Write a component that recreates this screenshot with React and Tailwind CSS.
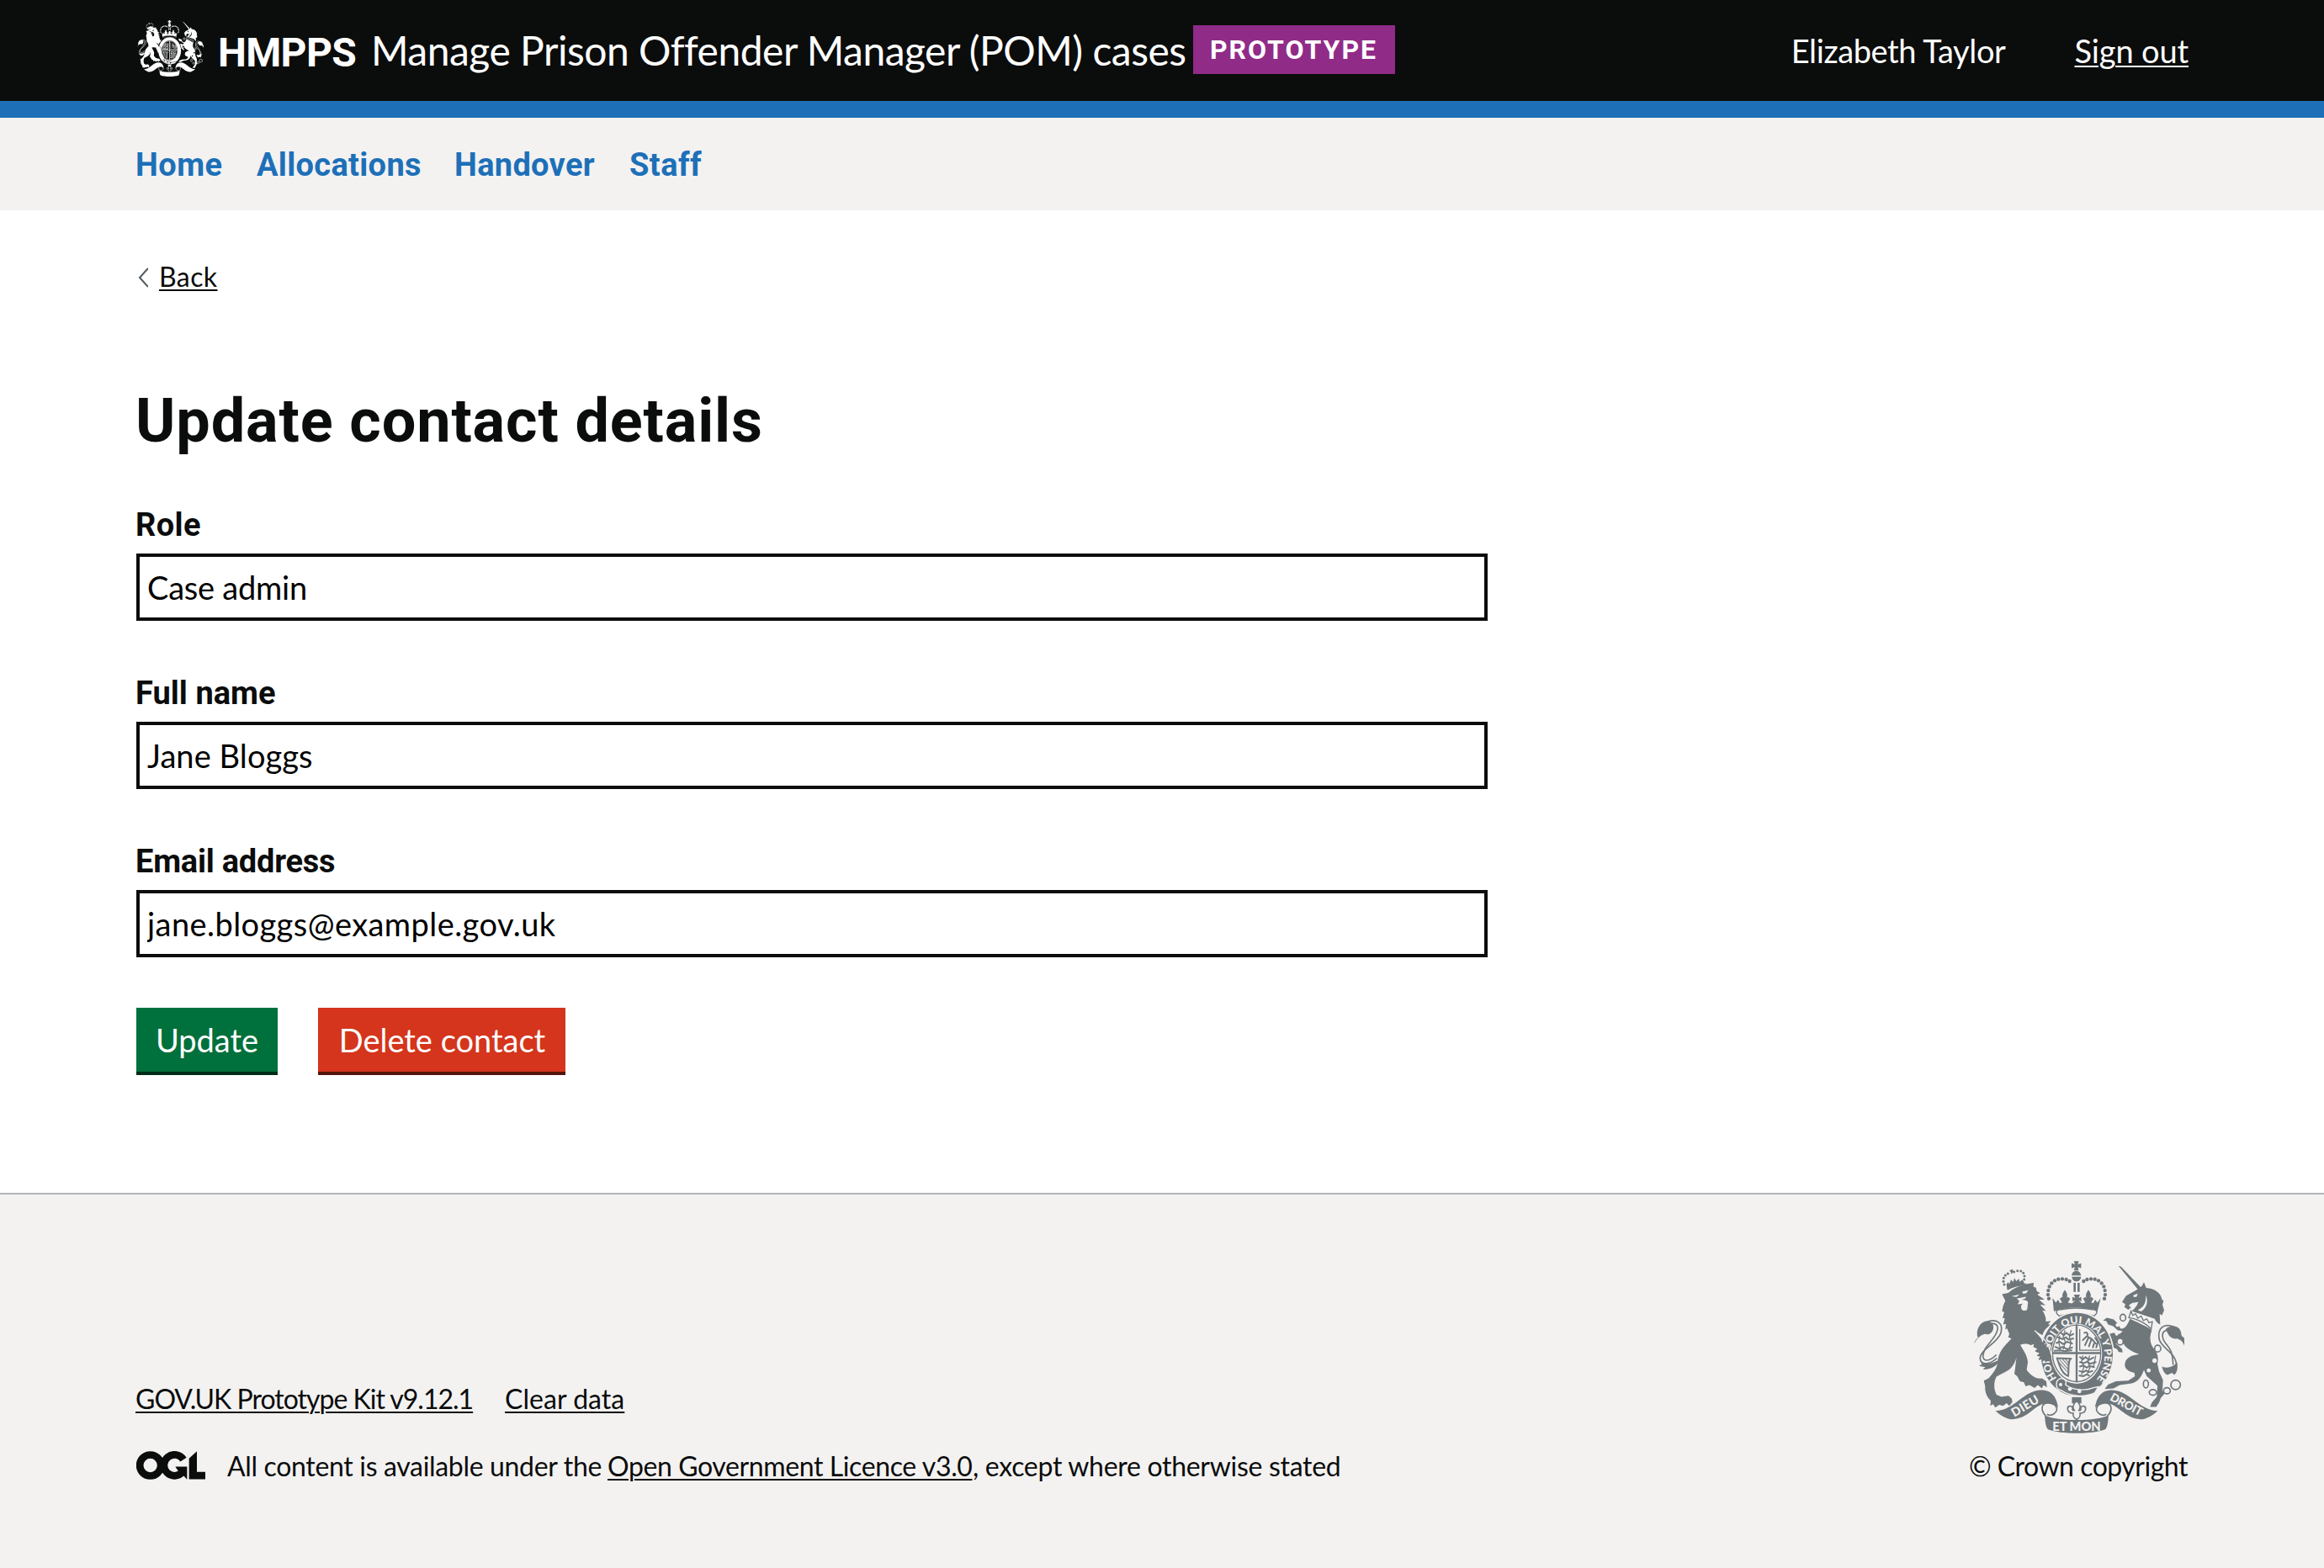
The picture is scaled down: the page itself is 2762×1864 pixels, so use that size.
const PEARLS = [
  [345, 192], [342, 178], [343, 163], [347, 149], [355, 137], [366, 128], [379, 123], [393, 122], [407, 124], [419, 130],
];

const LION_CROWN_PEARLS = [
  [186, 142], [183, 131], [184, 119], [190, 109], [199, 103], [221, 97], [233, 93], [245, 94], [254, 101], [258, 112], [257, 124],
];

function Crest({ className, ink, ground, compact = false }) {
  return (
    <svg className={className} viewBox="78 58 750 614" preserveAspectRatio="none" fill={ink} aria-hidden="true">
      {/* crown */}
      <path d="M434 59h18l-4 11 12-4v18l-12-4 4 12h-18l4-12-12 4V66l12 4z" />
      <path d="M426 110c1-10 8-17 17-17s16 7 17 17zM427 114h33c-1 10-8 17-17 17s-15-7-16-17z" />
      {PEARLS.map(([x, y]) => (
        <g key={x + "-" + y}>
          <circle cx={x} cy={y} r="6.500" />
          <circle cx={888 - x} cy={y} r="6.500" />
        </g>
      ))}
      <path d="M433 136h8v32h-8zM447 136h8v32h-8z" />
      <path d="M358 190l12 16 8-10 6 12 8-2-8-14 8-6 3 4c-4-12 0-20 7-29 7 9 11 17 7 29l4-4 8 6-8 14 14 3 12-10-10 3v-16l10 4-5-12h22l-5 12 10-4v16l-10-3 12 10 12-3-8-14 8-6 4 4c-4-12 0-20 7-29 7 9 11 17 7 29l3-4 8 6-8 14 8 2 6-12 8 10 12-16-12 48c-40-18-115-18-155 0z" />
      <path d="M374 246c-6-10 2-15 14-15 36-7 75-7 112 0 12 0 20 5 14 15l-8 8c-40-14-84-14-124 0z" fill={ground} stroke={ink} strokeWidth="4" />

      {/* lion */}
      {LION_CROWN_PEARLS.map(([x, y]) => (
        <circle key={x + "-" + y} cx={x} cy={y} r="4.500" />
      ))}
      <path d="M206 90l5 1 1-4 5 1-1 4 5 2-2 5-4-1-1 6-5-1 1-6-5-2zM194 140l6-6 4 6 6-15 8 8 4-14 7 11 9-9 3 12 8-8 5 5 4 10-62 18z" />
      <path d="M196 155c22-12 44-17 66-18l2 7c-24 1-46 7-66 18z" />
      <path d="M178 176L200 172C222 152 252 140 291 136L290 150L299 153L302 166L314 172L304 178L330 196L310 196L333 216L314 214L335 236L322 234C332 250 336 262 334 274L353 272L342 283L352 286C338 294 328 304 322 322L296 308C316 332 332 350 336 372L352 396L348 404L353 416L340 412L334 420L326 408L308 410L314 398L302 396L312 386L296 380L304 370L290 364L296 352L280 358C270 352 256 352 243 357C256 380 268 394 270 418L266 446C280 466 300 480 320 476L336 486L338 508L326 500L320 512L306 500L294 510L276 500L262 504L256 490L242 486L232 468L222 460C226 440 226 420 230 402C220 430 210 444 192 452L158 470C148 490 148 512 158 534L176 542L200 538C212 544 216 552 214 562L204 574L194 564L182 574L168 570L154 580L146 568L136 574L138 556C122 540 116 520 118 504L113 484L130 476C148 456 160 440 162 420C164 384 184 362 212 334L200 330L204 318L196 298L190 302L192 282L182 284L188 262L180 262L186 240L178 238C180 224 182 214 190 200Z" />
      <path d="M212 184l28-7-10 9zM250 167l22-5-8 11-12 1z" fill={ground} />
      <path d="M230 192l34-7-4 7-12 4 14 2c8 2 10 6 8 14l-2 18c-4 6-16 6-20 0-4-8-2-16 4-20l-18 2 6-12z" fill={ground} />
      <path d="M122 276C158 260 184 280 174 314C162 352 98 374 100 406C102 424 124 434 160 404" fill="none" stroke={ink} strokeWidth="5" />
      <path d="M142 280C168 282 166 300 154 322C136 352 112 366 110 398C112 416 132 418 158 392" fill="none" stroke={ink} strokeWidth="5" />
      <path d="M79 352c2-14 10-16 14-24-6-2-2-8-4-14 2-20 14-42 38-42 16 2 22 14 20 26-4 18-16 24-30 20-16 4-30 18-38 34zM98 410c14 22 44 14 70 0-4 20-30 36-58 34l8-8-22-4 10-6z" />

      {/* unicorn */}
      <path d="M593 75l10 4 71 74-12 6z" />
      <path d="M606 204L620 182L656 162L676 148L684 134L692 154C722 156 744 172 748 194L754 200L750 214L756 234L748 252L740 246L742 284C734 282 728 276 722 264L640 236C652 228 660 216 664 204L642 208L630 216L638 224L628 232L614 222L618 212Z" />
      <path d="M646 180l16-6-4 11-10 2zM690 180c12 24 2 46-16 58l-12-5c24-12 30-29 28-53z" fill={ground} />
      <path d="M638 236l6 16 10-6 8 16 12-8 8 16 12-6 8 14 12-4-4 26c-20-20-50-36-80-40z" fill={ground} stroke={ink} strokeWidth="4" />
      <path d="M634 264C660 276 690 288 712 304C704 328 704 346 716 366C732 384 738 402 732 424L738 452L752 482L750 520L758 530L744 546L738 562L728 578L706 578L712 562L730 542L732 502L694 468L684 446C676 470 664 488 640 494L598 500L576 512L544 514L556 498L584 486L628 484L652 468L650 456C628 452 614 442 616 424C620 400 644 392 668 390C640 382 620 368 612 354L600 348L584 352L606 372L608 384L594 382L588 372L574 366L560 340L554 320L574 314L598 318L608 308L590 304L574 290L556 284L550 272L538 270L552 260L576 266L592 282L600 298C614 302 624 290 634 264Z" />
      <g fill={ground}>
        <circle cx="590" cy="286" r="7" />
        <circle cx="587" cy="318" r="6" />
        <circle cx="722" cy="413" r="8" />
        <circle cx="701" cy="448" r="7" />
      </g>
      <g fill={ground} stroke={ink} strokeWidth="5">
        <ellipse cx="609" cy="260" rx="10" ry="12" />
        <ellipse cx="599" cy="345" rx="11" ry="12" />
        <ellipse cx="733" cy="370" rx="11" ry="12" />
        <ellipse cx="691" cy="496" rx="9" ry="14" />
        <ellipse cx="716" cy="526" rx="13" ry="10" />
        <ellipse cx="766" cy="520" rx="12" ry="11" />
        <circle cx="797" cy="499" r="17" />
      </g>
      <path d="M790 292C752 278 732 300 738 336C748 372 800 384 800 432" fill="none" stroke={ink} strokeWidth="5" />
      <path d="M770 304C744 306 746 332 762 352C778 372 786 380 788 428" fill="none" stroke={ink} strokeWidth="5" />
      <path d="M762 300c10-12 44-16 52 6 6 14 0 20 12 24 4 8 2 18 2 30-4-16-16-24-28-26-18 4-30-10-38-34zM802 420c4 22 0 34-10 44l-8-8-16 8c-10-4-16-14-20-30 18 8 36 4 54-14z" />

      {/* garter and shield */}
      <ellipse cx="445" cy="391" rx="133" ry="153" fill={ground} />
      <ellipse cx="445" cy="391" rx="128" ry="148" />
      <ellipse cx="444" cy="388" rx="91" ry="107" fill={ground} />
      <ellipse cx="444" cy="387" rx="86" ry="101" fill="none" stroke={ink} strokeWidth="4" />
      <path d="M444 284v206M358 386h172" stroke={ink} strokeWidth="7" />
      <g fill="none" stroke={ink} strokeWidth="6" strokeLinecap="round">
        <path d="M388 314l10 8 10-8 12 10 12-6M378 330l16 6 12-6 8 8 18-4M372 350l12-4 12 8 14-8 18 6M368 364l14 6 12-6 16 8 18-6M366 378l20-2 14 3 26-3" />
        <path d="M402 306l-6 22 8 18-8 26M424 306l-6 24 6 18-6 24M384 326l-4 20 6 26" strokeWidth="4" />
        <path d="M456 400l10 8 10-8 12 10 16-8M456 418l14 4 12-6 10 8 20-6M456 434l12-4 12 8 10-6 16 4M454 450l14 4 10-6 10 6 12-4M454 466l14 2 12-6 8 4" />
        <path d="M466 396l-4 20 8 18-8 28M490 396l-6 22 8 18-10 24M512 396l-4 20-4 18" strokeWidth="4" />
        <path d="M455 302v74h70" strokeWidth="4" />
        <path d="M472 314c8-4 14 2 10 12l16 10 14 16M480 326l-14 14M486 332l-12 26M496 338l-8 24M506 352l-4 14M514 366l6-20-10-14" />
        <path d="M374 404c10 30 18 56 40 64M374 404l48 2M424 406c-14 10-6 30-10 62" />
        <path d="M384 410l30 34M394 408l22 24M404 408l14 14M382 420l30 34" strokeWidth="3" />
      </g>
      {!compact && (
        <>
          <path id="garter-line" d="M373 476A98 117 0 1 1 494 499" fill="none" />
          <text fill={ground} className="font-['Lato'] text-[36px] font-black">
            <textPath href="#garter-line" textLength="512" lengthAdjust="spacingAndGlyphs">HONI SOIT QUI MAL Y PENSE</textPath>
          </text>
        </>
      )}
      <path d="M296 326C318 342 338 356 342 374L352 396L348 404L353 416L340 412L334 420L326 408L308 410L314 398L302 396L312 386L296 380L304 370L290 364Z" />
      <path d="M294 306C318 324 338 342 346 366L356 396" fill="none" stroke={ground} strokeWidth="4" />
      <path d="M374 486c14-20 40-4 30 12 28 22 76 22 98 12l20-4-14 22c-40 18-86 12-120-10-12 0-20-14-14-32z" stroke={ground} strokeWidth="4" />
      <g fill={ground}>
        <circle cx="387" cy="498" r="6" />
        <circle cx="420" cy="514" r="7" />
        <circle cx="454" cy="522" r="7" />
      </g>

      {/* motto ribbon */}
      <path d="M155 592C225 590 255 516 322 518C360 520 374 550 378 580C366 568 350 562 334 566C296 566 268 628 205 621C186 616 168 604 155 592Z" />
      <path d="M733 592C663 590 633 516 566 518C528 520 514 550 510 580C522 568 538 562 554 566C592 566 620 628 683 621C702 616 720 604 733 592Z" />
      <path d="M334 610C312 586 320 562 344 564C370 566 382 584 366 600C358 608 346 608 338 604" fill={ground} stroke={ink} strokeWidth="5" />
      <path d="M554 610C576 586 568 562 544 564C518 566 506 584 522 600C530 608 542 608 550 604" fill={ground} stroke={ink} strokeWidth="5" />
      <path d="M330 606C364 630 524 630 558 606C556 626 556 646 546 658C500 676 388 676 342 658C332 646 332 626 330 606Z" />
      {!compact && (
        <g fill={ground} className="font-['Lato'] font-black">
          <text transform="translate(222 614) rotate(-31)" textLength="106" className="text-[43px]">DIEU</text>
          <text transform="translate(560 552) rotate(28)" textLength="124" className="text-[41px]">DROIT</text>
          <text x="358" y="662" textLength="172" className="text-[44px]">ET MON</text>
        </g>
      )}
      <path d="M427 543h34v22h-34z" />
      <path d="M444 556c14 14 16 22 8 34 8 2 8-4 6-8 4-12 20-8 18 4-2 12-14 14-20 14 2 8-2 18-12 22-10-4-14-14-12-22-6 0-18-2-20-14-2-12 14-16 18-4-2 4-2 10 6 8-8-12-6-20 8-34z" fill={ground} stroke={ink} strokeWidth="5" />
    </svg>
  );
}

function OglLogo() {
  return (
    <svg className="mt-[2px] h-[34px] w-[82px]" viewBox="21 42 246 101" role="img" aria-label="OGL" fill="none" stroke="#0b0c0c">
      <circle cx="71" cy="92.500" r="37.500" strokeWidth="26" />
      <path d="M189 72A37.500 37.500 0 1 0 186 116" strokeWidth="26" />
      <path d="M160 97h42v46l-14-15-10-4z" fill="#0b0c0c" stroke="none" />
      <path d="M209 68l28-26v74h30v26h-58z" fill="#0b0c0c" stroke="none" />
    </svg>
  );
}

function Field({ label, value, labelClass, inputClass }) {
  return (
    <div>
      <label className={"-ml-px block h-[44px] pt-px font-['Roboto'] text-[38px] leading-[44px] font-bold " + labelClass}>{label}</label>
      <input
        className={"mt-[13px] block h-[80px] w-[1606px] border-4 border-[#0b0c0c] bg-white pl-[9px] text-[38px] text-black outline-none " + inputClass}
        defaultValue={value}
        spellCheck={false}
      />
    </div>
  );
}

const LINK = "underline decoration-2 underline-offset-[3px]";

export default function App() {
  return (
    <div className="flex h-[1864px] w-[2762px] flex-col bg-white font-['Lato',sans-serif] whitespace-nowrap text-[#0b0c0c]">
      <header className="flex h-[140px] shrink-0 items-start justify-between border-b-[20px] border-[#1d70b8] bg-[#0b0c0c] pr-[161px] pl-[163px] text-white">
        <div className="flex items-start">
          <Crest className="mt-[24px] h-[67px] w-[79px]" ink="#ffffff" ground="#0b0c0c" compact />
          <span className="mt-[35px] ml-[17px] w-[182px] font-['Roboto'] text-[48px] leading-[56px] font-bold tracking-[-0.65px]">HMPPS</span>
          <span className="mt-[32px] w-[977px] text-[48px] leading-[56px] tracking-[-0.5px]">Manage Prison Offender Manager (POM) cases</span>
          <strong className="mt-[30px] h-[58px] w-[240px] bg-[#912b88] pl-[20px] font-['Roboto'] text-[32px] leading-[58px] font-bold tracking-[1.99px]">PROTOTYPE</strong>
        </div>
        <div className="mt-[38px] flex gap-[82px] text-[38px] leading-[44px]">
          <span className="tracking-[-0.39px]">Elizabeth Taylor</span>
          <a className={"tracking-[-0.14px] " + LINK}>Sign out</a>
        </div>
      </header>

      <nav className="flex h-[110px] shrink-0 bg-[#f3f2f1] pl-[161px] font-['Roboto'] text-[38px] leading-[112px] font-bold text-[#1d70b8]">
        <a className="w-[144px] tracking-[0.43px]">Home</a>
        <a className="w-[235px] tracking-[0.31px]">Allocations</a>
        <a className="w-[208px] tracking-[0.31px]">Handover</a>
        <a className="tracking-[0.45px]">Staff</a>
      </nav>

      <main className="flex flex-1 flex-col px-[162px] pt-[59px]">
        <div className="flex h-[40px] items-center text-[32px] leading-[40px]">
          <svg className="mt-[2px] h-[24px] w-[14px]" viewBox="0 0 14 24" fill="none" stroke="#505a5f" strokeWidth="2">
            <path d="M14 1L4 12l10 11" />
          </svg>
          <a className={"ml-[13px] tracking-[0.4px] " + LINK}>Back</a>
        </div>
        <h1 className="mt-[112px] -ml-px h-[80px] font-['Roboto'] text-[72px] leading-[80px] font-bold tracking-[0.87px]">Update contact details</h1>
        <form className="mt-[60px] flex flex-col">
          <div className="flex flex-col gap-[63px]">
            <Field label="Role" value="Case admin" labelClass="tracking-[0.38px]" inputClass="tracking-[-0.23px]" />
            <Field label="Full name" value="Jane Bloggs" labelClass="tracking-[0.02px]" inputClass="tracking-[0.08px]" />
            <Field label="Email address" value="jane.bloggs@example.gov.uk" labelClass="tracking-[-0.24px]" inputClass="tracking-[0.44px]" />
          </div>
          <div className="mt-[60px] flex gap-[48px] text-[38px] leading-[76px] text-white">
            <button type="button" className="h-[80px] w-[168px] border-b-4 border-[#002d18] bg-[#00703c] text-center">Update</button>
            <button type="button" className="h-[80px] w-[294px] border-b-4 border-[#55150b] bg-[#d4351c] pl-px text-center">Delete contact</button>
          </div>
        </form>
      </main>

      <footer className="flex h-[446px] shrink-0 items-start justify-between border-t-2 border-[#b1b4b6] bg-[#f3f2f1] px-[162px] text-[32px] leading-[40px]">
        <div className="pt-[223px]">
          <div className="-ml-px flex">
            <a className={"w-[402px] tracking-[-1px] " + LINK}>GOV.UK Prototype Kit v9.12.1</a>
            <a className={"ml-[37px] tracking-[0.04px] " + LINK}>Clear data</a>
          </div>
          <div className="mt-[40px] flex items-start">
            <OglLogo />
            <p className="ml-[26px] flex">
              <span className="w-[452px] tracking-[-0.33px]">All content is available under the</span>
              <a className={"w-[434px] tracking-[-0.39px] " + LINK}>Open Government Licence v3.0</a>
              <span className="tracking-[-0.3px]">, except where otherwise stated</span>
            </p>
          </div>
        </div>
        <div className="flex w-[260px] flex-col pt-[79px]">
          <Crest className="ml-[6px] h-[205px] w-[250px]" ink="#6f777b" ground="#f3f2f1" />
          <span className="mt-[19px] tracking-[-0.5px]">© Crown copyright</span>
        </div>
      </footer>
    </div>
  );
}
